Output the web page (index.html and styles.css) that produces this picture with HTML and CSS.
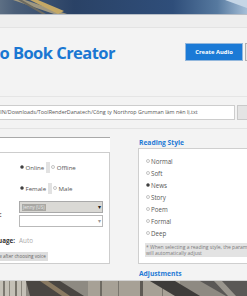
FILE: index.html
```html
<!DOCTYPE html>
<html lang="en">
<head>
  <meta charset="UTF-8">
  <title>Audio Book Creator</title>
  <link rel="stylesheet" href="styles.css">
</head>
<body>
  <!-- desktop wallpaper above the window -->
  <div class="wall wall-top">
    <svg width="247" height="14" viewBox="0 0 247 14">
      <defs>
        <linearGradient id="sky" x1="0" x2="1" y1="0" y2="0">
          <stop offset="0" stop-color="#5d6f84"/>
          <stop offset="0.06" stop-color="#4a5e78"/>
          <stop offset="0.3" stop-color="#2a4266"/>
          <stop offset="0.7" stop-color="#2f4e7a"/>
          <stop offset="0.88" stop-color="#56799f"/>
          <stop offset="1" stop-color="#a6bfd8"/>
        </linearGradient>
      </defs>
      <rect width="247" height="14" fill="url(#sky)"/>
      <polygon points="13,0 25,0 67,14 54,14" fill="#9f977f"/>
      <polygon points="30,0 38,0 64,11 58,14" fill="#c4a866"/>
      <polygon points="18,0 22,0 46,14 42,14" fill="#6c6a60"/>
      <polygon points="225,0 247,0 247,8" fill="#c6d6e6"/>
    </svg>
  </div>

  <div class="app">
    <div class="titlebar"></div>

    <header class="header">
      <h1 class="title">Audio Book Creator</h1>
      <div class="actions">
        <button class="btn btn-primary">Create Audio</button>
        <button class="btn btn-secondary">Settings</button>
      </div>
    </header>

    <div class="path-row">
      <div class="path-input">C:/Users/ADMIN/Downloads/ToolRenderDanatech/Công ty Northrop Grumman làm nên lị.txt</div>
      <button class="btn-browse">Browse</button>
    </div>

    <div class="panels">
      <!-- voice settings -->
      <section class="voice-panel">
        <div class="voice-head"></div>
        <div class="voice-box">
          <div class="field field-first">
            <span class="field-label">Type:</span>
            <div class="choice">
              <span class="radio checked"></span><span>Online</span>
              <span class="sep"></span>
              <span class="radio"></span><span>Offline</span>
            </div>
          </div>
          <div class="field field-second">
            <span class="field-label">Sex:</span>
            <div class="choice">
              <span class="radio checked"></span><span>Female</span>
              <span class="sep"></span>
              <span class="radio"></span><span>Male</span>
            </div>
          </div>
          <div class="field field-voice">
            <span class="field-label">Voice:</span>
            <div class="combos">
              <div class="combo combo-disabled"><span class="combo-sel">Jenny (US)</span><span class="arrow">▾</span></div>
              <div class="combo"><span class="arrow arrow-light">▾</span></div>
            </div>
          </div>
          <div class="lang-row">
            <span class="field-label">Language:</span>
            <span class="lang-value">Auto</span>
          </div>
          <div class="hint-row">
            <span class="hint-chip">Preview after choosing voice</span>
          </div>
        </div>
      </section>

      <!-- reading style -->
      <section class="style-panel">
        <h2 class="panel-title">Reading Style</h2>
        <div class="style-box">
          <ul class="style-list">
            <li><span class="radio"></span>Normal</li>
            <li><span class="radio"></span>Soft</li>
            <li><span class="radio checked"></span>News</li>
            <li><span class="radio"></span>Story</li>
            <li><span class="radio"></span>Poem</li>
            <li><span class="radio"></span>Formal</li>
            <li><span class="radio"></span>Deep</li>
          </ul>
          <p class="note">* When selecting a reading style, the parameters<br>will automatically adjust</p>
        </div>
        <h2 class="panel-title panel-title-next">Adjustments</h2>
      </section>
    </div>
  </div>

  <!-- desktop wallpaper below the window -->
  <div class="wall wall-bottom">
    <svg width="247" height="15" viewBox="0 0 247 15">
      <rect width="247" height="15" fill="#8e8a82"/>
      <rect x="0" y="0" width="26" height="15" fill="#c4c0b6"/>
      <rect x="3" y="0" width="2" height="15" fill="#7c7870"/>
      <rect x="9" y="0" width="1" height="15" fill="#8a867c"/>
      <rect x="15" y="0" width="2" height="15" fill="#77736a"/>
      <rect x="21" y="0" width="1" height="15" fill="#8a867c"/>
      <polygon points="26,0 60,0 84,15 30,15" fill="#4a4642"/>
      <polygon points="40,0 48,0 70,15 62,15" fill="#8a7a62"/>
      <rect x="88" y="0" width="92" height="15" fill="#a7a196"/>
      <rect x="100" y="0" width="2" height="15" fill="#6e6a62"/>
      <rect x="118" y="0" width="1" height="15" fill="#7a766e"/>
      <rect x="140" y="0" width="3" height="15" fill="#5e5a54"/>
      <rect x="162" y="0" width="1" height="15" fill="#7a766e"/>
      <polygon points="150,0 175,0 200,15 175,15" fill="#3e3c3a"/>
      <polygon points="200,0 247,0 247,15 226,15" fill="#5a5856"/>
      <polygon points="214,0 222,0 236,15 228,15" fill="#9a968e"/>
    </svg>
  </div>
</body>
</html>
```

FILE: styles.css
```css
/* reset */
* { margin: 0; padding: 0; box-sizing: border-box; }
body {
  width: 247px;
  height: 296px;
  overflow: hidden;
  font-family: 'Open Sans', sans-serif;
  background: #f3f3f3;
  color: #444;
}
.wall svg { display: block; }
.wall-top { height: 14px; }
.wall-bottom { height: 15px; }

/* the app window, wider than the visible area */
.app {
  margin-left: -60px;
  width: 380px;
  background: #f3f3f3;
  border-bottom: 1px solid #d4d4d4;
}
.titlebar {
  height: 14px;
  border-top: 1px solid #b7bec7;
  border-bottom: 1px solid #e3e3e3;
  background: #eeeeee;
}

/* header with title and actions */
.header {
  display: flex;
  align-items: flex-start;
  height: 69px;
  padding: 15px 15px 0 24px;
  border-bottom: 1px solid #e5e5e5;
}
.title {
  font-size: 16.5px;
  line-height: 20px;
  font-weight: 700;
  letter-spacing: -0.55px;
  color: #1a77d2;
}
.actions {
  margin-left: auto;
  display: flex;
  gap: 2px;
}
.btn {
  height: 18px;
  font-family: inherit;
  font-size: 5.8px;
  font-weight: 700;
  border-radius: 0;
}
.btn-primary {
  width: 58px;
  background: #1b7ad6;
  color: #fff;
  border: 1px solid #93b7dc;
}
.btn-secondary {
  width: 60px;
  background: #e6e6e6;
  color: #333;
  border: 1px solid #b0b0b0;
}

/* file path */
.path-row {
  display: flex;
  gap: 2px;
  height: 32px;
  padding: 8px 0 0 14px;
  border-bottom: 1px solid #e3e3e3;
}
.path-input {
  width: 281px;
  height: 15px;
  padding: 0 3px 0 10px;
  border: 1px solid #cdcdcd;
  background: #fff;
  font-size: 5.4px;
  line-height: 13px;
  color: #555;
  white-space: nowrap;
  overflow: hidden;
}
.btn-browse {
  width: 60px;
  height: 15px;
  border: 1px solid #c9c9c9;
  background: #e4e4e4;
  font-family: inherit;
  font-size: 6px;
  color: #333;
}

/* two panels */
.panels {
  display: grid;
  grid-template-columns: 140px 1fr;
  column-gap: 28px;
  height: 151px;
  padding: 8px 12px 0 30px;
}
.voice-head {
  height: 15px;
  border-top: 1px solid #a9a9a9;
  background: #fff;
}
.voice-box {
  height: 112px;
  border: 1px solid #cdcdcd;
  background: #fff;
  padding: 8px 6px 0 12px;
}
.field {
  display: grid;
  grid-template-columns: 36px 1fr;
  align-items: center;
}
.field-second { margin-top: 9px; }
.field-voice { margin-top: 7px; }
.field-label {
  font-size: 6.3px;
  font-weight: 700;
  color: #333;
}
.field-first .field-label,
.field-second .field-label { visibility: hidden; }
.choice {
  display: flex;
  align-items: center;
  height: 12px;
  font-size: 6.1px;
  color: #555;
}
.radio {
  width: 4px;
  height: 4px;
  margin: 0 1.5px 0 1px;
  border-radius: 50%;
  border: 1px solid #c4c4c4;
  background: #fff;
  flex-shrink: 0;
}
.radio.checked {
  border-color: #888;
  background: #222;
}
.sep {
  width: 4px;
  height: 11px;
  margin: 0 1px 0 2px;
  background: #e2e2e2;
}
.choice .sep + .radio { margin-left: 0; }
.combos {
  display: flex;
  flex-direction: column;
  gap: 2px;
  width: 84px;
}
.combo {
  display: flex;
  align-items: center;
  height: 12px;
  padding: 0 1px 0 2px;
  border: 1px solid #b9b9b9;
  background: #fff;
}
.combo-disabled {
  background: #dad9d5;
  border-color: #a9a9a9;
}
.combo-sel {
  padding: 0 1px;
  background: #a9a8a4;
  color: #e8e8e8;
  font-size: 4.6px;
  line-height: 7px;
}
.arrow {
  margin-left: auto;
  font-size: 6px;
  line-height: 6px;
  color: #222;
}
.arrow-light { color: #999; }
.lang-row {
  display: flex;
  align-items: center;
  gap: 4px;
  height: 12px;
  margin-top: 7px;
}
.lang-value {
  font-size: 6.3px;
  color: #aaa;
}
.hint-row {
  display: flex;
  margin-top: 6px;
}
.hint-chip {
  height: 9px;
  padding: 0 2px;
  background: #dedede;
  font-size: 4.6px;
  line-height: 9px;
  color: #666;
}

/* reading style */
.panel-title {
  margin-top: 1px;
  padding-left: 1px;
  font-size: 6.7px;
  line-height: 10px;
  font-weight: 700;
  color: #1f7ad6;
}
.panel-title-next { margin-top: 5px; }
.style-box {
  height: 116px;
  border: 1px solid #cfcfcf;
  background: #fff;
  padding: 6px 8px 0 6px;
}
.style-list { list-style: none; }
.style-list li {
  display: flex;
  align-items: center;
  height: 12px;
  font-size: 6.2px;
  color: #555;
}
.style-list .radio { margin: 0 1px 0 1px; }
.note {
  margin-top: 4px;
  height: 14px;
  padding: 1px;
  background: #e3e3e3;
  font-size: 5px;
  line-height: 6px;
  color: #7a7a7a;
  white-space: nowrap;
}
```
